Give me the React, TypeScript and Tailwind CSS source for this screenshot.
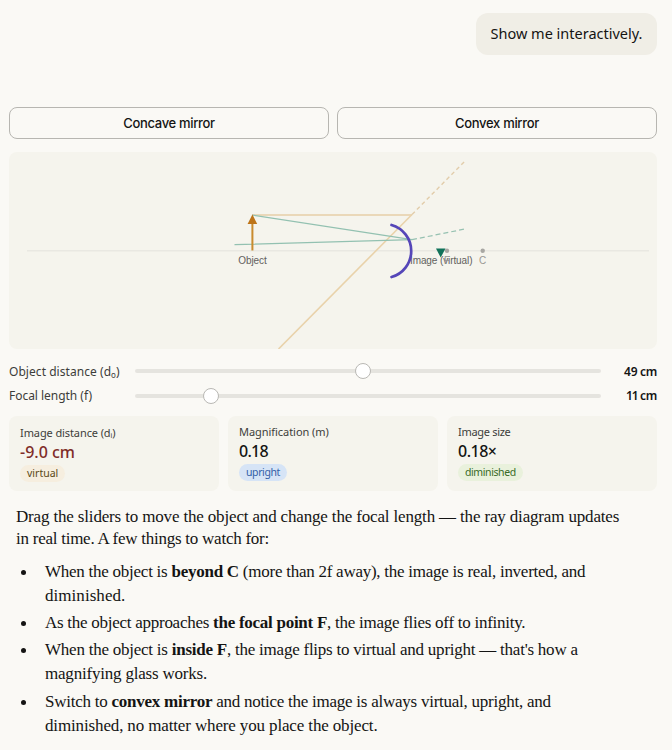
import type { ReactNode } from "react";

const sans = "font-['Noto_Sans','Open_Sans',sans-serif]";

function Slider({ label, value, valueClass, textClass, thumb, sub }: {
  label: string; value: ReactNode; valueClass: string; textClass: string; thumb: number; sub?: string;
}) {
  return (
    <div className="flex h-[25px] items-center text-[12px]">
      <div className={"w-[126px] whitespace-nowrap text-[#3d3d3a] " + textClass}>
        {label}
        {sub && <>(d<span className="relative top-[2px] text-[8px]">{sub}</span>)</>}
      </div>
      <div className="relative h-1 w-[466px] rounded-full bg-[#e5e4df]">
        <div
          className="absolute -top-[6px] h-4 w-4 rounded-full border border-[#b9b8b4] bg-white"
          style={{ left: thumb }}
        />
      </div>
      <div className={"flex-1 text-right font-semibold whitespace-nowrap text-[#141413] " + valueClass}>{value}</div>
    </div>
  );
}

function Card({ title, titleClass, value, valueClass, badge, badgeClass, pad }: {
  title: ReactNode; titleClass: string; value: string; valueClass: string; badge: string; badgeClass: string; pad: string;
}) {
  return (
    <div className={"h-[75px] flex-1 rounded-lg bg-[#f5f4ed] pl-[11px] " + pad}>
      <div className={"h-4 whitespace-nowrap text-[11px] leading-4 text-[#3d3d3a] " + titleClass}>{title}</div>
      <div className={"mt-[1px] h-[20px] text-[16px] font-medium leading-[20px] " + valueClass}>{value}</div>
      <div className={"mt-[3px] flex h-[17px] w-fit items-center rounded-full px-[7px] text-[10.5px] leading-none " + badgeClass}>
        {badge}
      </div>
    </div>
  );
}

function Item({ children, className }: { children: ReactNode; className: string }) {
  return (
    <li className={"flex " + className}>
      <span className="mt-[10px] mr-[19px] ml-[5px] h-[5px] w-[5px] shrink-0 rounded-full bg-[#141413]" />
      <div>{children}</div>
    </li>
  );
}

function Line({ children, className }: { children: ReactNode; className: string }) {
  return <div className={"whitespace-nowrap " + className}>{children}</div>;
}

function RayDiagram() {
  return (
    <svg className="mt-[13px] block h-[197px] w-[648px] rounded-lg bg-[#f5f4ed]" viewBox="9 152 648 197" fill="none">
      <line x1="27" y1="250.7" x2="649" y2="250.7" stroke="#e9e8e2" strokeWidth="1.6" />
      <path d="M252 215H412" stroke="#ead8b9" strokeWidth="1.9" />
      <path d="M412 214.5L278.5 349" stroke="#e9d2aa" strokeWidth="1.6" />
      <path d="M412 214.5L466 160" stroke="#e2cdab" strokeWidth="1.4" strokeDasharray="4 3" />
      <path d="M252 215L412 239.7L234.5 244.7" stroke="#93c1b1" strokeWidth="1.2" />
      <path d="M412 239.7L465 229" stroke="#96c1b1" strokeWidth="1.2" strokeDasharray="5 3" />
      <path d="M252.4 250.5V222" stroke="#c98b2e" strokeWidth="2" />
      <path d="M252.4 214.5L257.2 224H247.6Z" fill="#bd7418" />
      <circle cx="447" cy="250.7" r="2.2" fill="#a8a7a3" />
      <circle cx="482.7" cy="250.7" r="2.2" fill="#a8a7a3" />
      <g className="font-['Liberation_Sans',sans-serif] text-[10px]" fill="#62615d">
        <text x="238.2" y="264" textLength="28.5">Object</text>
        <text x="410" y="264" textLength="62.5">Image (virtual)</text>
        <text x="444" y="264" fill="#999894">F</text>
        <text x="479" y="264" fill="#999894">C</text>
      </g>
      <path d="M391.5 225A27 27 0 0 1 391.5 277" stroke="#5546b8" strokeWidth="2.7" strokeLinecap="round" />
      <path d="M436 248.5H445.5L440.7 257.5Z" fill="#11725a" />
    </svg>
  );
}

export default function App() {
  return (
    <main className={"h-[750px] w-[672px] overflow-hidden bg-[#faf9f5] pr-[15px] pl-[9px] pt-[13px] text-[#141413] " + sans}>
      <div className="ml-auto flex h-[42px] w-[181px] items-center justify-center rounded-xl bg-[#f0eee6] text-[14.5px] whitespace-nowrap">
        Show me interactively.
      </div>
      <div className="mt-[52px] flex gap-2 font-['Inter',sans-serif] text-[13px] font-medium">
        <button className="h-8 flex-1 rounded-lg border border-[#b7b6b1] pt-[2px] tracking-[-0.33px]">Concave mirror</button>
        <button className="h-8 flex-1 rounded-lg border border-[#b7b6b1] pt-[2px] tracking-[-0.3px]">Convex mirror</button>
      </div>
      <RayDiagram />
      <div className="mt-[9px]">
        <Slider label="Object distance " sub="o" value="49 cm" thumb={220} textClass="tracking-[0.05px] pt-[2px]" valueClass="tracking-[-0.3px] pt-[2px]" />
        <Slider label="Focal length (f)" value={<><span className="tracking-[-1.3px]">11</span> cm</>} thumb={68} textClass="tracking-[-0.03px]" valueClass="tracking-[-0.3px]" />
      </div>
      <div className="mt-2 flex gap-[9px]">
        <Card title={<>Image distance (d<span className="relative top-[1px] text-[7px]">i</span>)</>} titleClass="tracking-[-0.1px]" pad="pt-[9px]" value="-9.0 cm" valueClass="text-[#7f2c28]" badge="virtual" badgeClass="bg-[#f6eedf] text-[#5a4815]" />
        <Card title="Magnification (m)" titleClass="tracking-[-0.05px]" pad="pt-2" value="0.18" valueClass="tracking-[-0.7px]" badge="upright" badgeClass="bg-[#d6e4f6] text-[#325fa7] tracking-[-0.4px]" />
        <Card title="Image size" titleClass="tracking-[-0.3px]" pad="pt-2" value="0.18×" valueClass="tracking-[-0.5px]" badge="diminished" badgeClass="bg-[#e9f1dc] text-[#386b26] tracking-[-0.4px]" />
      </div>
      <div className="mt-[15px] pl-[7px] font-['Liberation_Serif',serif] text-[17px] leading-[22px]">
        <Line className="tracking-[-0.16px]">Drag the sliders to move the object and change the focal length — the ray diagram updates</Line>
        <Line className="tracking-[-0.25px]">in real time. A few things to watch for:</Line>
        <ul className="mt-[10px] leading-6">
          <Item className="">
            <Line className="tracking-[-0.253px]">When the object is <b>beyond C</b> (more than 2f away), the image is real, inverted, and</Line>
            <Line className="tracking-[0.05px]">diminished.</Line>
          </Item>
          <Item className="mt-[3px]">
            <Line className="tracking-[-0.265px]">As the object approaches <b>the focal point F</b>, the image flies off to infinity.</Line>
          </Item>
          <Item className="mt-[3px]">
            <Line className="tracking-[-0.237px]">When the object is <b>inside F</b>, the image flips to virtual and upright — that's how a</Line>
            <Line className="tracking-[-0.2px]">magnifying glass works.</Line>
          </Item>
          <Item className="mt-[4px]">
            <Line className="tracking-[-0.25px]">Switch to <b>convex mirror</b> and notice the image is always virtual, upright, and</Line>
            <Line className="tracking-[-0.14px]">diminished, no matter where you place the object.</Line>
          </Item>
        </ul>
      </div>
    </main>
  );
}
